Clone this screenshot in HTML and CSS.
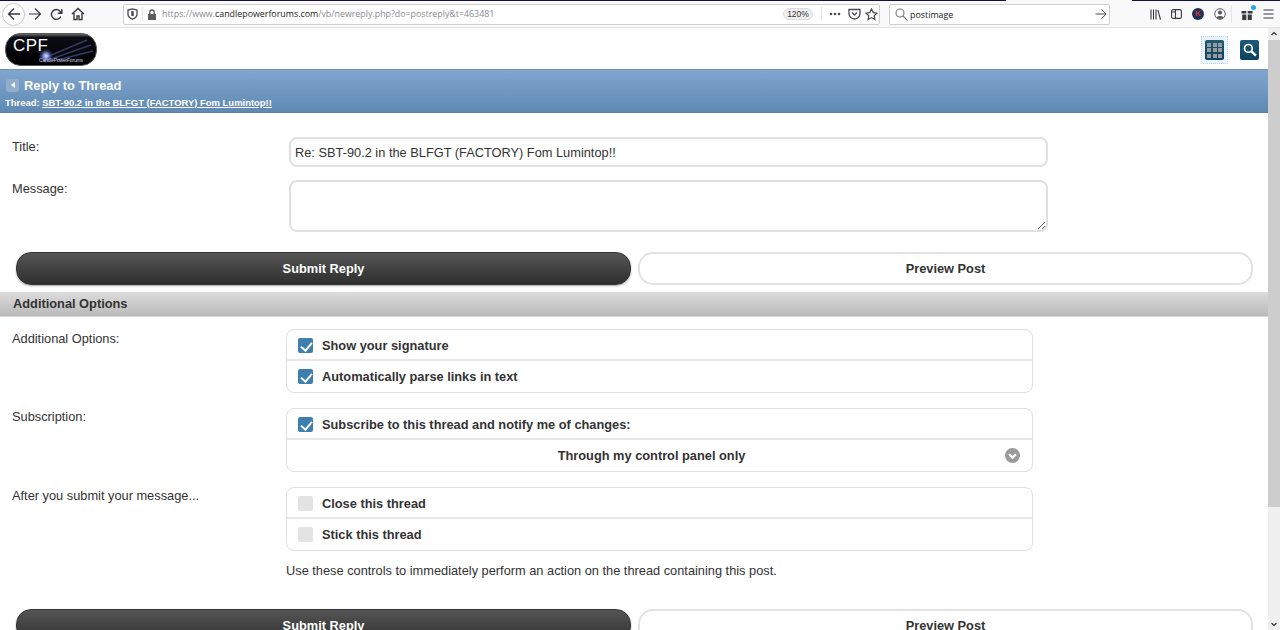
FILE: index.html
```html
<!DOCTYPE html>
<html lang="en">
<head>
    <meta charset="UTF-8">
    <meta name="viewport" content="width=device-width, initial-scale=1.0">
    <title>Reply to Thread</title>
    <link rel="stylesheet" href="styles.css">
</head>
<body>

    <div class="tabstrip"><div class="tabstrip-line"></div><div class="tabstrip-line tabstrip-right"></div></div>

    <div class="toolbar">
        <div class="nav-btns">
            <span class="back-btn">
                <svg width="14" height="14" viewBox="0 0 14 14" fill="none" stroke="#3a3a3c" stroke-width="1.3"><path d="M13 7H1.500M7 1.500 1.500 7 7 12.500"/></svg>
            </span>
            <svg class="fwd" width="14" height="14" viewBox="0 0 14 14" fill="none" stroke="#3a3a3c" stroke-width="1.2"><path d="M1 7h11.500M7 1.500 12.500 7 7 12.500"/></svg>
            <svg class="reload" width="13" height="13" viewBox="0 0 13 13" fill="none" stroke="#3a3a3c" stroke-width="1.4"><path d="M10.800 8.500A4.900 4.900 0 1 1 10 3.200L11.500 5M11.800 1v4.200H7.800"/></svg>
            <svg class="home" width="14" height="14" viewBox="0 0 14 14" fill="none" stroke="#3a3a3c" stroke-width="1.4"><path d="M1 7 7 1.500 13 7M3 6v6.500h3v-3.500h2v3.500h3V6"/></svg>
        </div>

        <div class="urlbar">
            <svg width="11" height="12" viewBox="0 0 11 12" fill="none" stroke="#4a4a4f" stroke-width="1.300"><path d="M1 2 5.500 .8 10 2v4c0 2.500-2 4.300-4.500 5.200C3 10.300 1 8.500 1 6z"/><path d="M5.500 3v5" stroke-width="2.400"/></svg>
            <span class="url-sep"></span>
            <svg width="10" height="11" viewBox="0 0 10 11" fill="#5b5b60"><path d="M1 5h8v6H1z"/><path d="M2.800 5V3.200a2.200 2.200 0 0 1 4.400 0V5" fill="none" stroke="#5b5b60" stroke-width="1.300"/></svg>
            <span class="url-text">https://www.<b>candlepowerforums.com</b>/vb/newreply.php?do=postreply&amp;t=463481</span>
            <span class="zoom-pill">120%</span>
            <span class="url-sep url-sep-right"></span>
            <svg class="dots" width="12" height="4" viewBox="0 0 12 4" fill="#4a4a4f"><circle cx="2" cy="2" r="1.300"/><circle cx="6" cy="2" r="1.300"/><circle cx="10" cy="2" r="1.300"/></svg>
            <svg width="13" height="12" viewBox="0 0 13 12" fill="none" stroke="#4a4a4f" stroke-width="1.300"><path d="M1 1.500h11v4a5.500 5.500 0 0 1-11 0z"/><path d="M4 4.500 6.500 7 9 4.500"/></svg>
            <svg width="13" height="13" viewBox="0 0 13 13" fill="none" stroke="#4a4a4f" stroke-width="1.200"><path d="M6.500 1 8.200 4.600l3.800.5-2.800 2.600.7 3.800-3.400-1.900-3.400 1.900.7-3.800L1 5.100l3.800-.5z"/></svg>
        </div>

        <div class="searchbar">
            <svg width="13" height="13" viewBox="0 0 13 13" fill="none" stroke="#77777c" stroke-width="1.100"><circle cx="5" cy="5" r="4"/><path d="m8 8 4.500 4.500"/></svg>
            <span class="search-text">postimage</span>
            <svg class="go" width="12" height="12" viewBox="0 0 12 12" fill="none" stroke="#4a4a4f" stroke-width="1"><path d="M.5 6h10.500M6.500 1.200 11 6l-4.500 4.800"/></svg>
        </div>

        <div class="tool-icons">
            <svg width="11" height="11" viewBox="0 0 11 11" fill="none" stroke="#3a3a3c" stroke-width="1.100"><path d="M1 .5v10M3.500 .5v10M6 .5v10M7.800 .8l2.700 9.800"/></svg>
            <svg width="11" height="10" viewBox="0 0 11 10" fill="none" stroke="#3a3a3c" stroke-width="1.100"><rect x=".6" y=".6" width="9.800" height="8.800" rx="1.500"/><path d="M4.500 .6v8.800M.6 3h3.900"/></svg>
            <span class="avatar-k">K</span>
            <svg width="12" height="12" viewBox="0 0 12 12"><circle cx="6" cy="6" r="5.300" fill="none" stroke="#5d5d60" stroke-width="1"/><circle cx="6" cy="4.600" r="2.100" fill="#5d5d60"/><path d="M2.400 9.500c.8-2 6.400-2 7.200 0A5 5 0 0 1 2.400 9.500" fill="#5d5d60"/></svg>
            <span class="tool-sep"></span>
            <span class="gift">
                <svg width="12" height="12" viewBox="0 0 12 12" fill="#3a3a3c"><path d="M.5 3h4.800v2.600H.5zM6.700 3h4.800v2.600H6.700zM1.200 6.600h4.100V12H1.200zM6.700 6.600h4.100V12H6.700z"/></svg>
                <i class="gift-dot"></i>
            </span>
            <svg width="11" height="10" viewBox="0 0 11 10" fill="none" stroke="#3a3a3c" stroke-width="1.200"><path d="M.5 1h10M.5 5h10M.5 9h10"/></svg>
        </div>
    </div>

    <div class="viewport">
        <div class="page">
            <div class="site-header">
                <svg class="logo" width="92" height="33" viewBox="0 0 92 33">
                    <defs>
                        <linearGradient id="logoBg" x1="0" y1="0" x2="0" y2="1">
                            <stop offset="0" stop-color="#777"/>
                            <stop offset=".12" stop-color="#0c0c14"/>
                            <stop offset="1" stop-color="#000"/>
                        </linearGradient>
                        <radialGradient id="logoGlow">
                            <stop offset="0" stop-color="#dfe6ff"/>
                            <stop offset=".4" stop-color="#6a78c4"/>
                            <stop offset="1" stop-color="#101030" stop-opacity="0"/>
                        </radialGradient>
                    </defs>
                    <rect x=".5" y=".5" width="91" height="32" rx="15" fill="url(#logoBg)" stroke="#555"/>
                    <path d="M42 24 82 7M46 26 86 12M52 27 88 18" stroke="#2f3a66" stroke-width="1.500"/>
                    <circle cx="41" cy="23" r="8" fill="url(#logoGlow)"/>
                    <text x="8" y="18" class="logo-cpf" textLength="35">CPF</text>
                    <text x="34" y="29" class="logo-small" textLength="44">CandlePowerForums</text>
                </svg>
                <div class="header-icons">
                    <span class="grid-focus">
                        <span class="square-icon">
                            <span class="grid-dots"><i></i><i></i><i></i><i></i><i></i><i></i><i></i><i></i><i></i></span>
                        </span>
                    </span>
                    <span class="square-icon">
                        <svg width="14" height="14" viewBox="0 0 13 13" fill="none" stroke="#fff"><circle cx="5" cy="5" r="3.600" stroke-width="1.600"/><path d="m7.800 7.800 4.200 4" stroke-width="2.200"/></svg>
                    </span>
                </div>
            </div>

            <div class="title-bar">
                <div class="title-row">
                    <span class="title-back"><i></i></span>
                    <span class="title-main">Reply to Thread</span>
                </div>
                <div class="title-sub">Thread: <a href="#">SBT-90.2 in the BLFGT (FACTORY) Fom Lumintop!!</a></div>
            </div>

            <div class="form-top">
                <div class="field-row">
                    <label class="field-label">Title:</label>
                    <input class="field-input" type="text" value="Re: SBT-90.2 in the BLFGT (FACTORY) Fom Lumintop!!">
                </div>
                <div class="field-row field-row-msg">
                    <label class="field-label field-label-msg">Message:</label>
                    <textarea class="field-input field-area"></textarea>
                </div>
            </div>

            <div class="btn-row">
                <button class="btn btn-dark">Submit Reply</button>
                <button class="btn btn-light">Preview Post</button>
            </div>

            <div class="section-bar">Additional Options</div>

            <div class="option-row first-option">
                <div class="option-label">Additional Options:</div>
                <div class="option-group">
                    <div class="option-item"><span class="check on"></span>Show your signature</div>
                    <div class="option-item"><span class="check on"></span>Automatically parse links in text</div>
                </div>
            </div>

            <div class="option-row">
                <div class="option-label option-label-tight">Subscription:</div>
                <div class="option-group">
                    <div class="option-item"><span class="check on"></span>Subscribe to this thread and notify me of changes:</div>
                    <div class="option-item option-select">
                        Through my control panel only
                        <svg class="select-arrow" width="15" height="15" viewBox="0 0 15 15"><circle cx="7.500" cy="7.500" r="7.500" fill="#9a9a9a"/><path d="M4 6.200 7.500 9.600 11 6.200" fill="none" stroke="#fff" stroke-width="2.200"/></svg>
                    </div>
                </div>
            </div>

            <div class="option-row">
                <div class="option-label option-label-tight">After you submit your message...</div>
                <div class="option-col">
                    <div class="option-group">
                        <div class="option-item"><span class="check"></span>Close this thread</div>
                        <div class="option-item"><span class="check"></span>Stick this thread</div>
                    </div>
                    <p class="option-note">Use these controls to immediately perform an action on the thread containing this post.</p>
                </div>
            </div>

            <div class="btn-row btn-row-bottom">
                <button class="btn btn-dark">Submit Reply</button>
                <button class="btn btn-light">Preview Post</button>
            </div>
        </div>

        <div class="scrollbar">
            <svg width="12" height="12" viewBox="0 0 12 12" fill="none" stroke="#333" stroke-width="1.200"><path d="M3.500 7 6 4.500 8.500 7"/></svg>
            <div class="scroll-thumb"></div>
            <svg class="scroll-down" width="12" height="12" viewBox="0 0 12 12" fill="none" stroke="#333" stroke-width="1.200"><path d="M3.500 5 6 7.500 8.500 5"/></svg>
        </div>
    </div>

</body>
</html>
```

FILE: styles.css
```css
* {
    box-sizing: border-box;
}

html, body {
    height: 630px;
    overflow: hidden;
}

body {
    margin: 0;
    font-family: "Liberation Sans", Arial, sans-serif;
    font-size: 12.8px;
    color: #333;
    background-color: #fff;
}

/* browser chrome */
.tabstrip {
    height: 1px;
    display: flex;
    justify-content: space-between;
    background-color: #f9f9fa;
}

.tabstrip-line {
    width: 1006px;
    background-color: #14123c;
}

.tabstrip-right {
    width: 148px;
}

.toolbar {
    height: 27px;
    display: flex;
    align-items: center;
    background-color: #f9f9fa;
    border-bottom: 1px solid #e1e1e2;
}

.nav-btns {
    width: 123px;
    display: flex;
    align-items: center;
    padding-left: 2px;
}

.back-btn {
    width: 23px;
    height: 23px;
    display: flex;
    align-items: center;
    justify-content: center;
    border: 1px solid #c9c9cb;
    border-radius: 50%;
    background-color: #fff;
}

.fwd {
    margin-left: 3px;
}

.reload {
    margin-left: 8px;
}

.home {
    margin-left: 8px;
}

.urlbar {
    width: 757px;
    height: 21px;
    display: flex;
    align-items: center;
    gap: 4px;
    padding: 0 1px 0 3px;
    background-color: #fff;
    border: 1px solid #cfcfd1;
    border-radius: 2px;
}

.url-sep {
    width: 1px;
    height: 14px;
    background-color: #e4e4e5;
}

.url-sep-right {
    margin-left: 4px;
}

.url-text {
    flex: 1;
    margin-left: 1px;
    font-family: "Open Sans", "Liberation Sans", sans-serif;
    font-size: 8.85px;
    color: #8a8a8e;
    white-space: nowrap;
}

.url-text b {
    font-weight: 400;
    color: #222;
}

.zoom-pill {
    width: 30px;
    height: 12px;
    font-size: 8.5px;
    line-height: 11px;
    text-align: center;
    color: #333;
    background-color: #eee;
    border: 1px solid #ddd;
    border-radius: 6px;
}

.dots {
    margin: 0 3px 0 3px;
}

.searchbar {
    width: 221px;
    height: 21px;
    margin-left: 9px;
    display: flex;
    align-items: center;
    padding: 0 2px 0 5px;
    background-color: #fff;
    border: 1px solid #cfcfd1;
    border-radius: 2px;
}

.search-text {
    flex: 1;
    margin-left: 2px;
    font-family: "Open Sans", "Liberation Sans", sans-serif;
    font-size: 8.9px;
    color: #222;
}

.tool-icons {
    flex: 1;
    display: flex;
    align-items: center;
    padding-left: 40px;
    gap: 10px;
}

.avatar-k {
    width: 12px;
    height: 12px;
    font-size: 8px;
    font-weight: 700;
    line-height: 12px;
    text-align: center;
    color: #d0393e;
    background-color: #1e3350;
    border-radius: 50%;
}

.tool-sep {
    width: 1px;
    height: 18px;
    margin: 0 -1px 0 -5px;
    background-color: #e4e4e5;
}

.gift {
    position: relative;
    display: flex;
}

.gift-dot {
    position: absolute;
    top: -3px;
    right: -3px;
    width: 5px;
    height: 5px;
    background-color: #2aa3ee;
    border-radius: 50%;
}

/* page and scrollbar */
.viewport {
    height: 602px;
    display: flex;
}

.page {
    width: 1268px;
    flex: none;
    overflow: hidden;
}

.scrollbar {
    flex: 1;
    display: flex;
    flex-direction: column;
    background-color: #f0f0f0;
}

.scroll-thumb {
    height: 467px;
    background-color: #cdcdcd;
}

.scroll-down {
    margin-top: auto;
}

/* site header */
.site-header {
    height: 41px;
    display: flex;
    align-items: flex-start;
    justify-content: space-between;
    padding: 5px 9px 0 5px;
}

.logo-cpf {
    font-size: 17px;
    fill: #fff;
}

.logo-small {
    font-size: 5px;
    fill: #c6cce4;
}

.header-icons {
    display: flex;
    align-items: center;
    gap: 12px;
    margin-top: 3px;
}

.grid-focus {
    padding: 3px;
    background-color: #eaf3fb;
    border: 1px dotted #bcd6ec;
}

.square-icon {
    width: 19px;
    height: 20px;
    display: flex;
    align-items: center;
    justify-content: center;
    background: linear-gradient(#1f5a78, #0c4360);
    border-radius: 2px;
}

.grid-dots {
    width: 15px;
    display: grid;
    grid-template-columns: repeat(3, 4px);
    gap: 1.5px;
}

.grid-dots i {
    height: 4px;
    background-color: #9a9a9a;
}

/* blue title bar */
.title-bar {
    height: 44px;
    padding: 7px 5px 0 5px;
    color: #fff;
    background: linear-gradient(#80a6ce, #5f89b3);
    border-top: 1px solid #6b93bd;
    border-bottom: 1px solid #57809f;
}

.title-row {
    display: flex;
    align-items: center;
    height: 16px;
}

.title-back {
    width: 13px;
    height: 13px;
    margin: 0 5px 0 1px;
    display: flex;
    align-items: center;
    justify-content: center;
    background-color: #93aecd;
    border-radius: 3px;
}

.title-back i {
    border-style: solid;
    border-width: 3px 4px 3px 0;
    border-color: transparent #fff transparent transparent;
}

.title-main {
    font-size: 12.9px;
    font-weight: 700;
}

.title-sub {
    margin-top: 4px;
    font-size: 9.45px;
    font-weight: 700;
}

.title-sub a {
    color: #fff;
}

/* title and message */
.form-top {
    padding-top: 24px;
}

.field-row {
    display: flex;
    align-items: flex-start;
    padding-left: 12px;
}

.field-row-msg {
    margin-top: 13px;
}

.field-label {
    width: 277px;
    flex: none;
    padding-top: 2px;
}

.field-label-msg {
    padding-top: 1px;
}

.field-input {
    width: 759px;
    height: 30px;
    margin: 0;
    padding: 0 4px;
    font-family: inherit;
    font-size: 12.8px;
    color: #333;
    background-color: #fff;
    border: 2px solid #e0e0e0;
    border-radius: 8px;
    outline: none;
}

.field-area {
    height: 52px;
    display: block;
}

/* buttons */
.btn-row {
    display: flex;
    justify-content: space-between;
    padding: 0 15px 0 16px;
    margin-top: 20px;
}

.btn-row-bottom {
    margin-top: 31px;
}

.btn {
    width: 615px;
    height: 33px;
    font-family: inherit;
    font-size: 12.8px;
    font-weight: 700;
    border-radius: 15px;
    cursor: pointer;
}

.btn-dark {
    color: #fff;
    background: linear-gradient(#555, #2f2f2f);
    border: 1px solid #333;
    box-shadow: 0 1px 2px #aaa;
}

.btn-light {
    color: #333;
    background-color: #fff;
    border: 2px solid #e2e2e2;
}

/* additional options */
.section-bar {
    height: 25px;
    margin-top: 7px;
    padding-left: 13px;
    font-weight: 700;
    line-height: 24px;
    color: #333;
    background: linear-gradient(#dcdcdc, #b9b9b9);
    border-bottom: 1px solid #d6d6d6;
}

.option-row {
    display: flex;
    align-items: flex-start;
    margin-top: 15px;
    padding-left: 12px;
}

.first-option {
    margin-top: 12px;
}

.option-label {
    width: 274px;
    flex: none;
    padding-top: 2px;
}

.option-label-tight {
    padding-top: 1px;
}

.option-col {
    width: 747px;
}

.option-group {
    width: 747px;
    background-color: #fff;
    border: 1px solid #dedede;
    border-radius: 8px;
}

.option-item {
    height: 31px;
    display: flex;
    align-items: center;
    padding: 1px 0 0 11px;
    font-weight: 700;
    border-bottom: 2px solid #e8e8e8;
}

.option-item:last-child {
    padding-top: 0;
    border-bottom: none;
}

.option-select {
    position: relative;
    justify-content: center;
    padding-left: 0;
    padding-right: 16px;
}

.select-arrow {
    position: absolute;
    top: 8px;
    right: 12px;
}

.check {
    width: 15px;
    height: 15px;
    margin-right: 9px;
    flex: none;
    background-color: #e3e3e3;
    border-radius: 2px;
}

.check.on {
    position: relative;
    background-color: #3d7fb0;
}

/* white tick drawn with two borders */
.check.on::after {
    content: "";
    position: absolute;
    left: 5px;
    top: 2px;
    width: 5px;
    height: 9px;
    border: solid #fff;
    border-width: 0 2px 2px 0;
    transform: rotate(40deg);
}

.option-note {
    margin: 12px 0 0 0;
}
```
